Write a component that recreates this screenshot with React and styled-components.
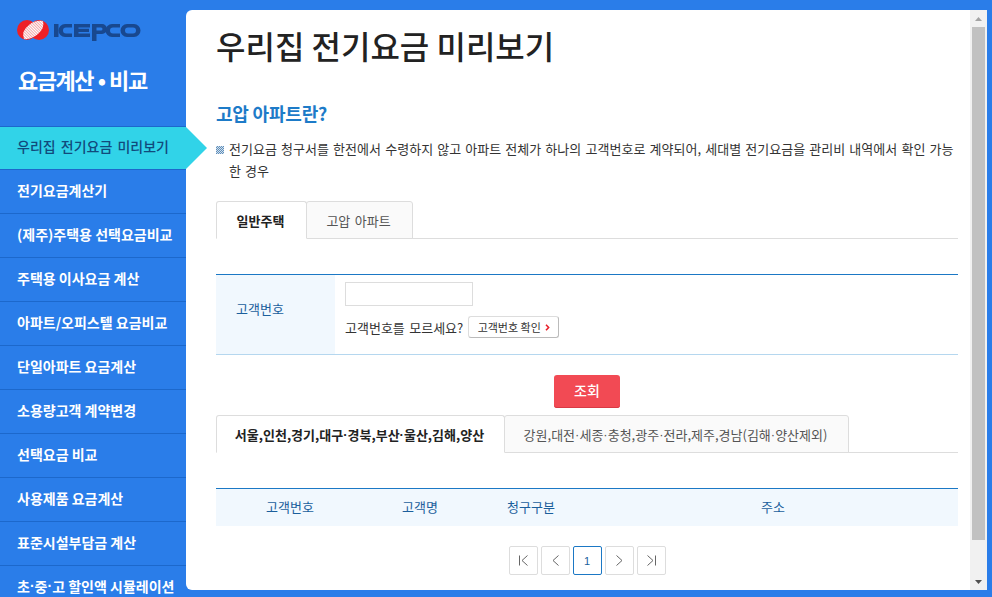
import React from "react";
import styled, { createGlobalStyle } from "styled-components";

const Global = createGlobalStyle`
  html, body { margin: 0; padding: 0; height: 100%; overflow: hidden; background: #2a7de9; }
  * { box-sizing: border-box; }
  body { font-family: "Noto Sans CJK KR", "Noto Sans", sans-serif; }
`;
const Page = styled.div`display: flex; width: 992px; height: 597px; overflow: hidden; background: #2a7de9;`;
const Side = styled.aside`width: 186px; flex: none; height: 597px; display: flex; flex-direction: column; position: relative; z-index: 2;`;
const LogoRow = styled.div`height: 44px; flex: none; padding: 17px 0 0 17px; display: flex; align-items: flex-start;`;
const SideTitle = styled.div`height: 82px; flex: none; padding: 19px 0 0 18px; color: #fff; font-size: 22px; font-weight: 700; letter-spacing: -1.45px; word-spacing: 1px; line-height: 32px;`;
const Nav = styled.nav`display: flex; flex-direction: column; flex: none;`;
const Item = styled.div`
  position: relative; flex: none; height: 44px; width: 186px; padding: 0 0 4px 17px;
  display: flex; align-items: center; white-space: pre;
  font-size: 14px; font-weight: ${p => p.$active ? 500 : 700};
  word-spacing: ${p => p.$active ? "2px" : "0"};
  color: ${p => p.$active ? "#114a7c" : "#fff"};
  background: ${p => p.$active ? "#31d3e8" : "transparent"};
  border-bottom: 1px solid #1c68cc;
  border-top: ${p => p.$active ? "1px solid #1c68cc" : "none"};
`;
const Arrow = styled.span`
  position: absolute; left: 186px; top: 0; width: 0; height: 0;
  border-top: 21px solid transparent; border-bottom: 21px solid transparent;
  border-left: 21px solid #31d3e8;
`;
const Dot = styled.span`font-family: "Liberation Sans", sans-serif;`;
const Panel = styled.main`
  margin-top: 10px; width: 801px; height: 580px; background: #fff; border-radius: 6px 0 0 6px;
  display: flex; overflow: hidden;
`;
const Content = styled.div`flex: 1; min-width: 0; padding: 0 12px 0 30px; color: #333; font-size: 13px;`;
const Title = styled.h1`margin: 11px 0 0; font-size: 32px; line-height: 48px; font-weight: 500; color: #222; letter-spacing: 0;`;
const SubTitle = styled.h2`margin: 31px 0 0; font-size: 18px; line-height: 26px; font-weight: 700; color: #1d7bc8; letter-spacing: -0.2px;`;
const Notice = styled.p`margin: 12px 0 0; padding-left: 13px; position: relative; line-height: 22px; font-size: 13px; letter-spacing: 0.04px; word-spacing: 1.1px; color: #333;`;
const Bullet = styled.span`
  position: absolute; left: 0; top: 8px; width: 8px; height: 8px;
  background: repeating-conic-gradient(#5b8fbf 0% 25%, #d5dfe8 0% 50%) 0 0 / 2px 2px;
`;
const Tabs = styled.div`display: flex; border-bottom: 1px solid #ddd; margin-top: ${p => p.$mt}px; height: 38px;`;
const Tab = styled.div`
  height: 38px; flex: none; width: ${p => p.$w}px; margin-right: ${p => p.$active ? "-1px" : 0}; padding-right: 2px;
  display: flex; align-items: center; justify-content: center; white-space: pre;
  border: 1px solid #ddd; border-radius: 3px 3px 0 0;
  border-bottom: ${p => p.$active ? "1px solid #fff" : "1px solid #ddd"};
  background: ${p => p.$active ? "#fff" : "#fafafa"};
  color: ${p => p.$active ? "#222" : "#555"};
  font-weight: ${p => p.$active ? 700 : 400};
  font-size: 13px; position: relative; z-index: ${p => p.$active ? 1 : 0};
  word-spacing: 1.500px;
`;
const Form = styled.div`margin-top: 35px; height: 81px; display: flex; border-top: 1px solid rgb(27, 120, 197); border-bottom: 1px solid rgb(181, 215, 239);`;
const FormLabel = styled.div`width: 119px; flex: none; background: #f1f8fe; color: #1b5f9c; padding: 0 0 13px 20px; display: flex; align-items: center; font-size: 13px;`;
const FormBody = styled.div`padding: 7px 0 0 10px; display: flex; flex-direction: column;`;
const Input = styled.input`width: 128px; height: 24px; border: 1px solid #ddd; background: #fff; padding: 0; outline: none;`;
const HelpRow = styled.div`display: flex; align-items: center; margin-top: 10px; font-size: 13px; color: #333; word-spacing: 1.500px;`;
const SmallBtn = styled.button`
  margin-left: 5px; height: 22px; width: 91px; padding: 0; background: #fff; color: #333; font: inherit; font-size: 11px;
  border: 1px solid #ddd; border-right-color: #bbb; border-bottom-color: #bbb; border-radius: 3px;
  display: flex; align-items: center; justify-content: center; gap: 4px; word-spacing: 0;
`;
const Actions = styled.div`display: flex; justify-content: center; margin-top: 20px;`;
const Search = styled.button`width: 66px; height: 33px; border: none; border-radius: 3px; background: #f24a54; color: #fff; font: inherit; font-size: 14px; font-weight: 500; padding: 0 0 4px; box-shadow: inset 0 -1px 0 #d83a44;`;
const TableHead = styled.div`
  margin-top: 35px; height: 38px; display: grid; grid-template-columns: 148px 112px 110px 374px;
  border-top: 1px solid rgb(27, 120, 197); background: #f1f8fe; color: #1b5f9c; font-size: 13px; text-align: center; line-height: 36px;
`;
const Pager = styled.div`display: flex; justify-content: center; gap: 3px; margin-top: 20px;`;
const PageBtn = styled.div`
  width: 29px; height: 29px; border: 1px solid ${p => p.$on ? "rgb(27, 120, 197)" : "#ddd"}; border-radius: 2px;
  display: flex; align-items: center; justify-content: center; color: #1b5f9c; font-family: "Liberation Sans", sans-serif; font-size: 11px; background: #fff;
`;
const Bar = styled.div`width: 17px; flex: none; background: #f1f1f1; display: flex; flex-direction: column; align-items: center;`;
const BarBtn = styled.div`height: 17px; width: 17px; flex: none; display: flex; align-items: center; justify-content: center;`;
const Thumb = styled.div`width: 13px; flex: none; height: 513px; background: #c1c1c1;`;
const BarSpacer = styled.div`flex: 1;`;

const Logo = () => (
  <svg width="124" height="27" viewBox="0 0 124 27">
    <defs>
      <pattern id="h" width="2" height="2" patternUnits="userSpaceOnUse" patternTransform="rotate(45)">
        <rect width="2" height="1" fill="#fff" /><rect y="1" width="2" height="1" fill="#f4a9a9" />
      </pattern>
    </defs>
    <ellipse cx="10" cy="13" rx="10" ry="10" fill="#ee2026" />
    <ellipse cx="22" cy="13" rx="10" ry="10" fill="#ee2026" />
    <path d="M7 22 Q4 14 12 8 Q18 3 26 4 Q28 11 21 17 Q14 23 7 22Z" fill="url(#h)" />
    <g fill="#18488f">
      <rect x="37" y="7" width="4.500" height="13" />
      <path d="M55 7h-7a6.500 6.500 0 0 0 0 13h7v-3.500h-6a3 3 0 0 1 0-6h6z" />
      <path d="M57 7h16v3.500h-11.500v1.300h10.500v3.300h-10.500v1.400h11.500v3.500h-16z" />
      <path d="M75 7h10a5 5 0 0 1 0 10h-5.500v7h-4.500zM79.500 10.500v3h4.500a1.500 1.500 0 0 0 0-3z" />
      <path d="M103 7h-8a6.500 6.500 0 0 0 0 13h8v-3.500h-7a3 3 0 0 1 0-6h7z" />
      <path fillRule="evenodd" d="M110 7h7a6.500 6.500 0 0 1 0 13h-7a6.500 6.500 0 0 1 0-13zM111 10.500a3 3 0 0 0 0 6h5a3 3 0 0 0 0-6z" />
    </g>
  </svg>
);
const Pg = ({ d }) => (
  <svg width="13" height="13" viewBox="0 0 13 13" fill="none" stroke="#666" strokeWidth="1"><path d={d} /></svg>
);

const menu = ["전기요금계산기", "(제주)주택용 선택요금비교", "주택용 이사요금 계산", "아파트/오피스텔 요금비교", "단일아파트 요금계산", "소용량고객 계약변경", "선택요금 비교", "사용제품 요금계산", "표준시설부담금 계산"];

export default function App() {
  return (
    <Page>
      <Global />
      <Side>
        <LogoRow><Logo /></LogoRow>
        <SideTitle>요금계산 • 비교</SideTitle>
        <Nav>
          <Item $active>우리집 전기요금 미리보기<Arrow /></Item>
          {menu.map(m => <Item key={m}>{m}</Item>)}
          <Item>초<Dot>·</Dot>중<Dot>·</Dot>고 할인액 시뮬레이션</Item>
        </Nav>
      </Side>
      <Panel>
        <Content>
          <Title>우리집 전기요금 미리보기</Title>
          <SubTitle>고압 아파트란?</SubTitle>
          <Notice><Bullet />전기요금 청구서를 한전에서 수령하지 않고 아파트 전체가 하나의 고객번호로 계약되어, 세대별 전기요금을 관리비 내역에서 확인 가능한 경우</Notice>
          <Tabs $mt={19}>
            <Tab $active $w={91}>일반주택</Tab>
            <Tab $w={107}>고압 아파트</Tab>
          </Tabs>
          <Form>
            <FormLabel>고객번호</FormLabel>
            <FormBody>
              <Input aria-label="고객번호" />
              <HelpRow>고객번호를 모르세요?
                <SmallBtn>고객번호 확인 <svg width="5" height="7" viewBox="0 0 5 7" fill="none" stroke="#e8202a" strokeWidth="1.6"><path d="M1 .8 3.600 3.500 1 6.200" /></svg></SmallBtn>
              </HelpRow>
            </FormBody>
          </Form>
          <Actions><Search>조회</Search></Actions>
          <Tabs $mt={7}>
            <Tab $active $w={289}>서울,인천,경기,대구<Dot>·</Dot>경북,부산<Dot>·</Dot>울산,김해,양산</Tab>
            <Tab $w={345}>강원,대전<Dot>·</Dot>세종<Dot>·</Dot>충청,광주<Dot>·</Dot>전라,제주,경남(김해<Dot>·</Dot>양산제외)</Tab>
          </Tabs>
          <TableHead>
            <span>고객번호</span><span>고객명</span><span>청구구분</span><span>주소</span>
          </TableHead>
          <Pager>
            <PageBtn><Pg d="M2.500 1.500v10M10.500 1.500 5 6.500l5.500 5" /></PageBtn>
            <PageBtn><Pg d="M9.500 1.500 4 6.500l5.500 5" /></PageBtn>
            <PageBtn $on>1</PageBtn>
            <PageBtn><Pg d="M3.500 1.500 9 6.500l-5.500 5" /></PageBtn>
            <PageBtn><Pg d="M10.500 1.500v10M2.500 1.500 8 6.500l-5.500 5" /></PageBtn>
          </Pager>
        </Content>
        <Bar>
          <BarBtn><svg width="7" height="4" viewBox="0 0 7 4"><path d="M3.500 0 7 4H0z" fill="#a3a3a3" /></svg></BarBtn>
          <Thumb />
          <BarSpacer />
          <BarBtn><svg width="7" height="4" viewBox="0 0 7 4"><path d="M0 0h7L3.500 4z" fill="#505050" /></svg></BarBtn>
        </Bar>
      </Panel>
    </Page>
  );
}
